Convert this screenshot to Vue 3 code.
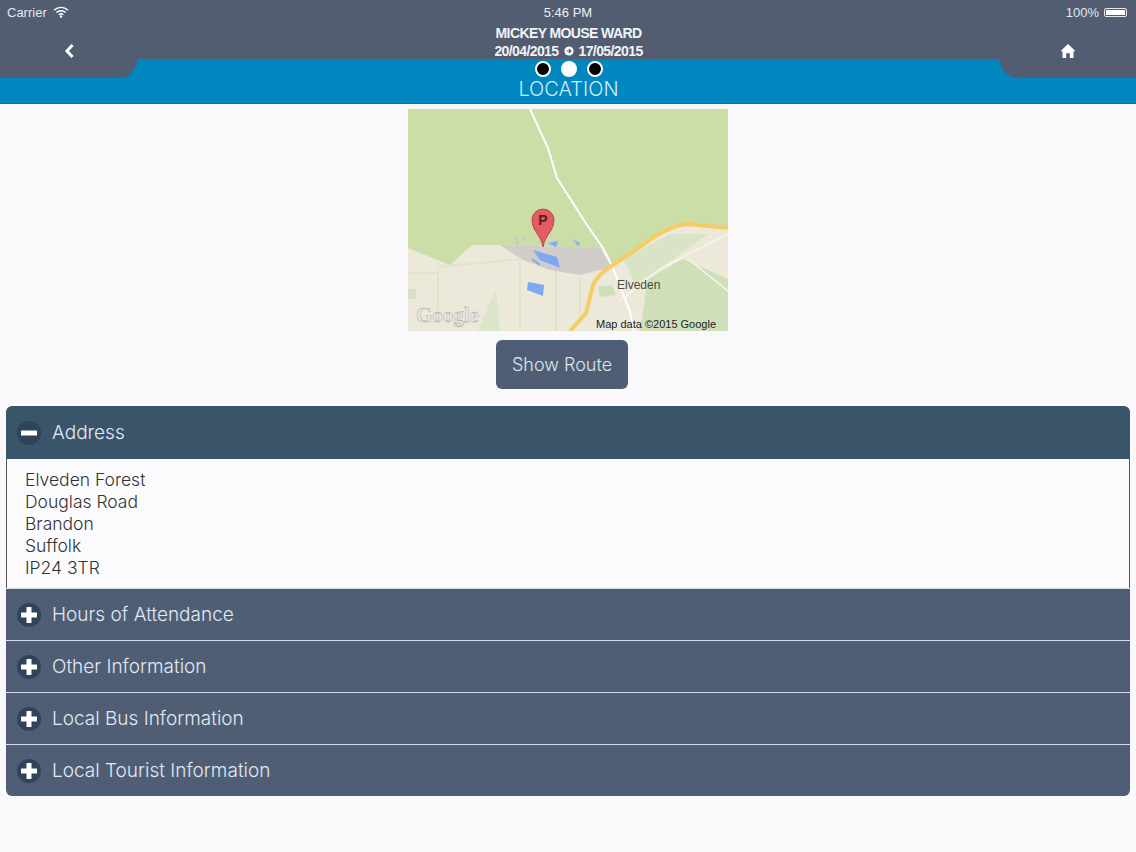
<script setup>
import { ref } from "vue";

const sections = [
  { title: "Address", lines: ["Elveden Forest", "Douglas Road", "Brandon", "Suffolk", "IP24 3TR"] },
  { title: "Hours of Attendance", lines: [] },
  { title: "Other Information", lines: [] },
  { title: "Local Bus Information", lines: [] },
  { title: "Local Tourist Information", lines: [] },
];

const openIndex = ref(0);

function toggle(index) {
  openIndex.value = openIndex.value === index ? -1 : index;
}
</script>

<template>
  <div class="page">
    <header class="header">
      <div class="status-bar">
        <div class="status-left">
          <span>Carrier</span>
          <svg class="wifi" viewBox="0 0 16 12" width="16" height="12">
            <path d="M1 4.2a10 10 0 0 1 14 0M3.4 6.6a6.6 6.6 0 0 1 9.2 0M5.7 8.8a3.3 3.3 0 0 1 4.6 0" fill="none" stroke="#fff" stroke-width="1.4" />
            <circle cx="8" cy="10.5" r="1.2" fill="#fff" />
          </svg>
        </div>
        <div class="status-time">5:46 PM</div>
        <div class="status-right">
          <span>100%</span>
          <span class="battery"><span class="battery-fill"></span></span>
        </div>
      </div>

      <div class="nav">
        <div class="tab tab-left">
          <svg viewBox="0 0 14 18" width="14" height="18">
            <path d="M10.5 3 L5 9 L10.5 15" fill="none" stroke="#fff" stroke-width="3" />
          </svg>
        </div>
        <div class="nav-center">
          <div class="trip">
            <div class="trip-name">MICKEY MOUSE WARD</div>
            <div class="trip-dates">
              <span>20/04/2015</span>
              <svg viewBox="0 0 10 10" width="10" height="10">
                <circle cx="5" cy="5" r="4.6" fill="#fff" />
                <path d="M2.4 5h4M4.8 3 L7 5 L4.8 7" fill="none" stroke="#505c72" stroke-width="1.1" />
              </svg>
              <span>17/05/2015</span>
            </div>
          </div>
          <div class="dots">
            <span class="dot"></span>
            <span class="dot dot-active"></span>
            <span class="dot"></span>
          </div>
          <div class="page-title">LOCATION</div>
        </div>
        <div class="tab tab-right">
          <svg viewBox="0 0 16 16" width="16" height="16">
            <path d="M8 1 L15.5 8.2 L13.5 8.2 L13.5 15 L9.8 15 L9.8 10.2 L6.2 10.2 L6.2 15 L2.5 15 L2.5 8.2 L0.5 8.2 Z" fill="#fff" />
          </svg>
        </div>
      </div>
    </header>

    <main class="content">
      <div class="map">
        <svg viewBox="0 0 320 222" width="320" height="222">
          <rect width="320" height="222" fill="#ece8da" />
          <!-- fields -->
          <path d="M232 222 L240 170 L275 150 L320 170 L320 222 Z" fill="#cfe0b8" />
          <path d="M216 150 L262 125 L300 125 L252 160 L226 175 Z" fill="#d9e4c6" />
          <path d="M0 180 L8 180 L8 190 L0 190 Z" fill="#d6e2c2" />
          <path d="M70 222 L88 180 L92 222 Z" fill="#dbe5c9" />
          <path d="M190 178 L204 176 L208 186 L192 188 Z" fill="#cfe0b8" />
          <path d="M30 158 L112 150 M30 158 L30 200 M112 150 L112 222 M148 162 L148 222 M172 168 L172 206 M0 164 L30 164" stroke="#dfe5cc" stroke-width="2" fill="none" />
          <!-- forest -->
          <path d="M0 0 L320 0 L320 117 L285 115 L265 116 L239 133 L205 156 L192 139 L92 136 L64 136 L42 156 L0 139 Z" fill="#cbdea8" />
          <!-- clearing -->
          <path d="M92 136 L192 139 L204 158 L172 166 L142 161 L115 151 Z" fill="#d0ccca" />
          <!-- water -->
          <path d="M125 141 L149 148 L152 159 L132 151 Z" fill="#7ea8f2" />
          <path d="M120 173 L136 176 L135 187 L119 181 Z" fill="#7ea8f2" />
          <path d="M140 134 L150 132 L148 138 Z M165 131 L172 134 L170 137 Z M108 128 L110 136 M115 126 L118 132" fill="#7ea8f2" stroke="#a5c3ea" stroke-width="1" />
          <path d="M124 150 L132 156" stroke="#7ea8f2" stroke-width="2" />
          <!-- roads -->
          <path d="M122 0 L140 39 L149 69 L179 116 L195 139 L205 159 L222 203 L226 222" fill="none" stroke="#fff" stroke-width="2" />
          <path d="M212 192 L252 160 L320 125 M280 150 L320 182" fill="none" stroke="#f6f6f0" stroke-width="1.5" />
          <path d="M162 222 L178 204 L185 176 Q190 165 205 156 L239 133 Q262 116 280 115 L320 119" fill="none" stroke="#f4cd63" stroke-width="4" />
          <!-- labels -->
          <text x="209" y="180" class="map-place">Elveden</text>
          <text x="8" y="213" class="map-logo">Google</text>
          <text x="188" y="219" class="map-credit">Map data ©2015 Google</text>
          <!-- pin -->
          <path d="M135 138 C133 126 124 122 124 111 A11 11 0 0 1 146 111 C146 122 137 126 135 138 Z" fill="#e25c60" stroke="#b23a40" stroke-width="0.8" />
          <text x="135" y="116" class="map-pin">P</text>
        </svg>
      </div>

      <button class="route-button">Show Route</button>

      <section class="accordion">
        <div v-for="(section, index) in sections" :key="section.title" class="section">
          <div class="section-head" :class="{ 'section-open': openIndex === index }" @click="toggle(index)">
            <span class="toggle">
              <svg viewBox="0 0 24 24" width="24" height="24">
                <rect x="4" y="9.5" width="16" height="5" rx="0.5" fill="#fff" />
                <rect v-if="openIndex !== index" x="9.5" y="4" width="5" height="16" rx="0.5" fill="#fff" />
              </svg>
            </span>
            <span>{{ section.title }}</span>
          </div>
          <div v-if="openIndex === index" class="section-body">
            <div v-for="line in section.lines" :key="line">{{ line }}</div>
          </div>
        </div>
      </section>
    </main>
  </div>
</template>

<style>
html,
body {
  margin: 0;
  background: #f9f9fb;
}
</style>

<style scoped>
.page {
  width: 1136px;
  height: 852px;
  overflow: hidden;
  background: #f9f9fb;
  font-family: Inter, "Liberation Sans", sans-serif;
  font-weight: 300;
}

.header {
  background: #0087bf;
  border-bottom: 1px solid #0079ad;
  height: 103px;
}

.status-bar {
  height: 24px;
  background: #525d71;
  display: grid;
  grid-template-columns: 1fr auto 1fr;
  align-items: center;
  padding: 0 7px;
  color: #e6e8ee;
  font-family: "Liberation Sans", sans-serif;
  font-weight: 400;
  font-size: 13px;
}

.status-left {
  display: flex;
  align-items: center;
  gap: 6px;
}

.status-time {
  color: #eef0f4;
}

.status-right {
  display: flex;
  align-items: center;
  justify-content: flex-end;
  gap: 5px;
}

.battery {
  width: 23px;
  height: 9px;
  border: 1px solid #e6e8ee;
  border-radius: 2px;
  padding: 1px;
  box-sizing: border-box;
  display: flex;
  margin-right: 2px;
}

.battery-fill {
  flex: 1;
  background: #fff;
}

.nav {
  display: grid;
  grid-template-columns: 137px 1fr 136px;
  align-items: start;
}

.tab {
  height: 54px;
  background: #525d71;
  display: flex;
  align-items: flex-start;
  justify-content: center;
  padding-top: 18px;
  box-sizing: border-box;
}

.tab-left {
  border-bottom-right-radius: 18px;
}

.tab-right {
  border-bottom-left-radius: 18px;
  padding-top: 19px;
}

.nav-center {
  display: flex;
  flex-direction: column;
  align-items: center;
}

.trip {
  width: 100%;
  height: 35px;
  background: #525d71;
  color: #f2f3f6;
  font-family: "Liberation Sans", sans-serif;
  font-weight: 700;
  font-size: 14px;
  line-height: 18px;
  text-align: center;
  letter-spacing: -0.6px;
  box-sizing: border-box;
}

.trip-dates {
  display: flex;
  justify-content: center;
  align-items: center;
  gap: 5px;
}

.dots {
  display: flex;
  gap: 10px;
  margin-top: 2px;
}

.dot {
  width: 12px;
  height: 12px;
  border-radius: 50%;
  background: #000;
  border: 2px solid #fff;
}

.dot-active {
  width: 16px;
  height: 16px;
  background: #fff;
  border: 0;
}

.page-title {
  color: #cdeefc;
  font-size: 20px;
  line-height: 20px;
  margin-top: 2px;
}

.content {
  display: flex;
  flex-direction: column;
  align-items: center;
  padding: 5px 6px 0;
}

.map {
  height: 222px;
  width: 320px;
}

.map svg {
  display: block;
}

.map-place {
  font: 400 12px "Liberation Sans", sans-serif;
  fill: #4a4a40;
}

.map-logo {
  font: 700 21px "Liberation Serif", serif;
  fill: #e8e8e4;
  stroke: #9a9a94;
  stroke-width: 0.4;
}

.map-credit {
  font: 400 11px "Liberation Sans", sans-serif;
  fill: #222;
}

.map-pin {
  font: 700 14px "Liberation Sans", sans-serif;
  fill: #5a1a1c;
  text-anchor: middle;
}

.route-button {
  width: 132px;
  height: 49px;
  margin: 9px 12px 0 0;
  border: 0;
  border-radius: 6px;
  background: #4f5e75;
  color: #dfe6f0;
  font: inherit;
  font-size: 18px;
}

.accordion {
  width: 100%;
  margin-top: 17px;
  border-radius: 6px;
  overflow: hidden;
}

.section + .section {
  border-top: 1px solid #d5dde8;
}

.section-head {
  height: 51px;
  background: #4f5e75;
  color: #e2e9f2;
  font-size: 19px;
  display: flex;
  align-items: center;
  gap: 11px;
  padding-left: 11px;
  cursor: pointer;
}

.section-open {
  height: 53px;
  background: #3a546a;
}

.toggle {
  width: 24px;
  height: 24px;
  border-radius: 50%;
  background: #2f435a;
  display: flex;
}

.section-body {
  height: 129px;
  box-sizing: border-box;
  padding: 10px 18px 0;
  background: #fbfbfd;
  border-left: 1px solid #555;
  border-right: 1px solid #555;
  color: #333;
  font-size: 17.5px;
  line-height: 22px;
}
</style>
